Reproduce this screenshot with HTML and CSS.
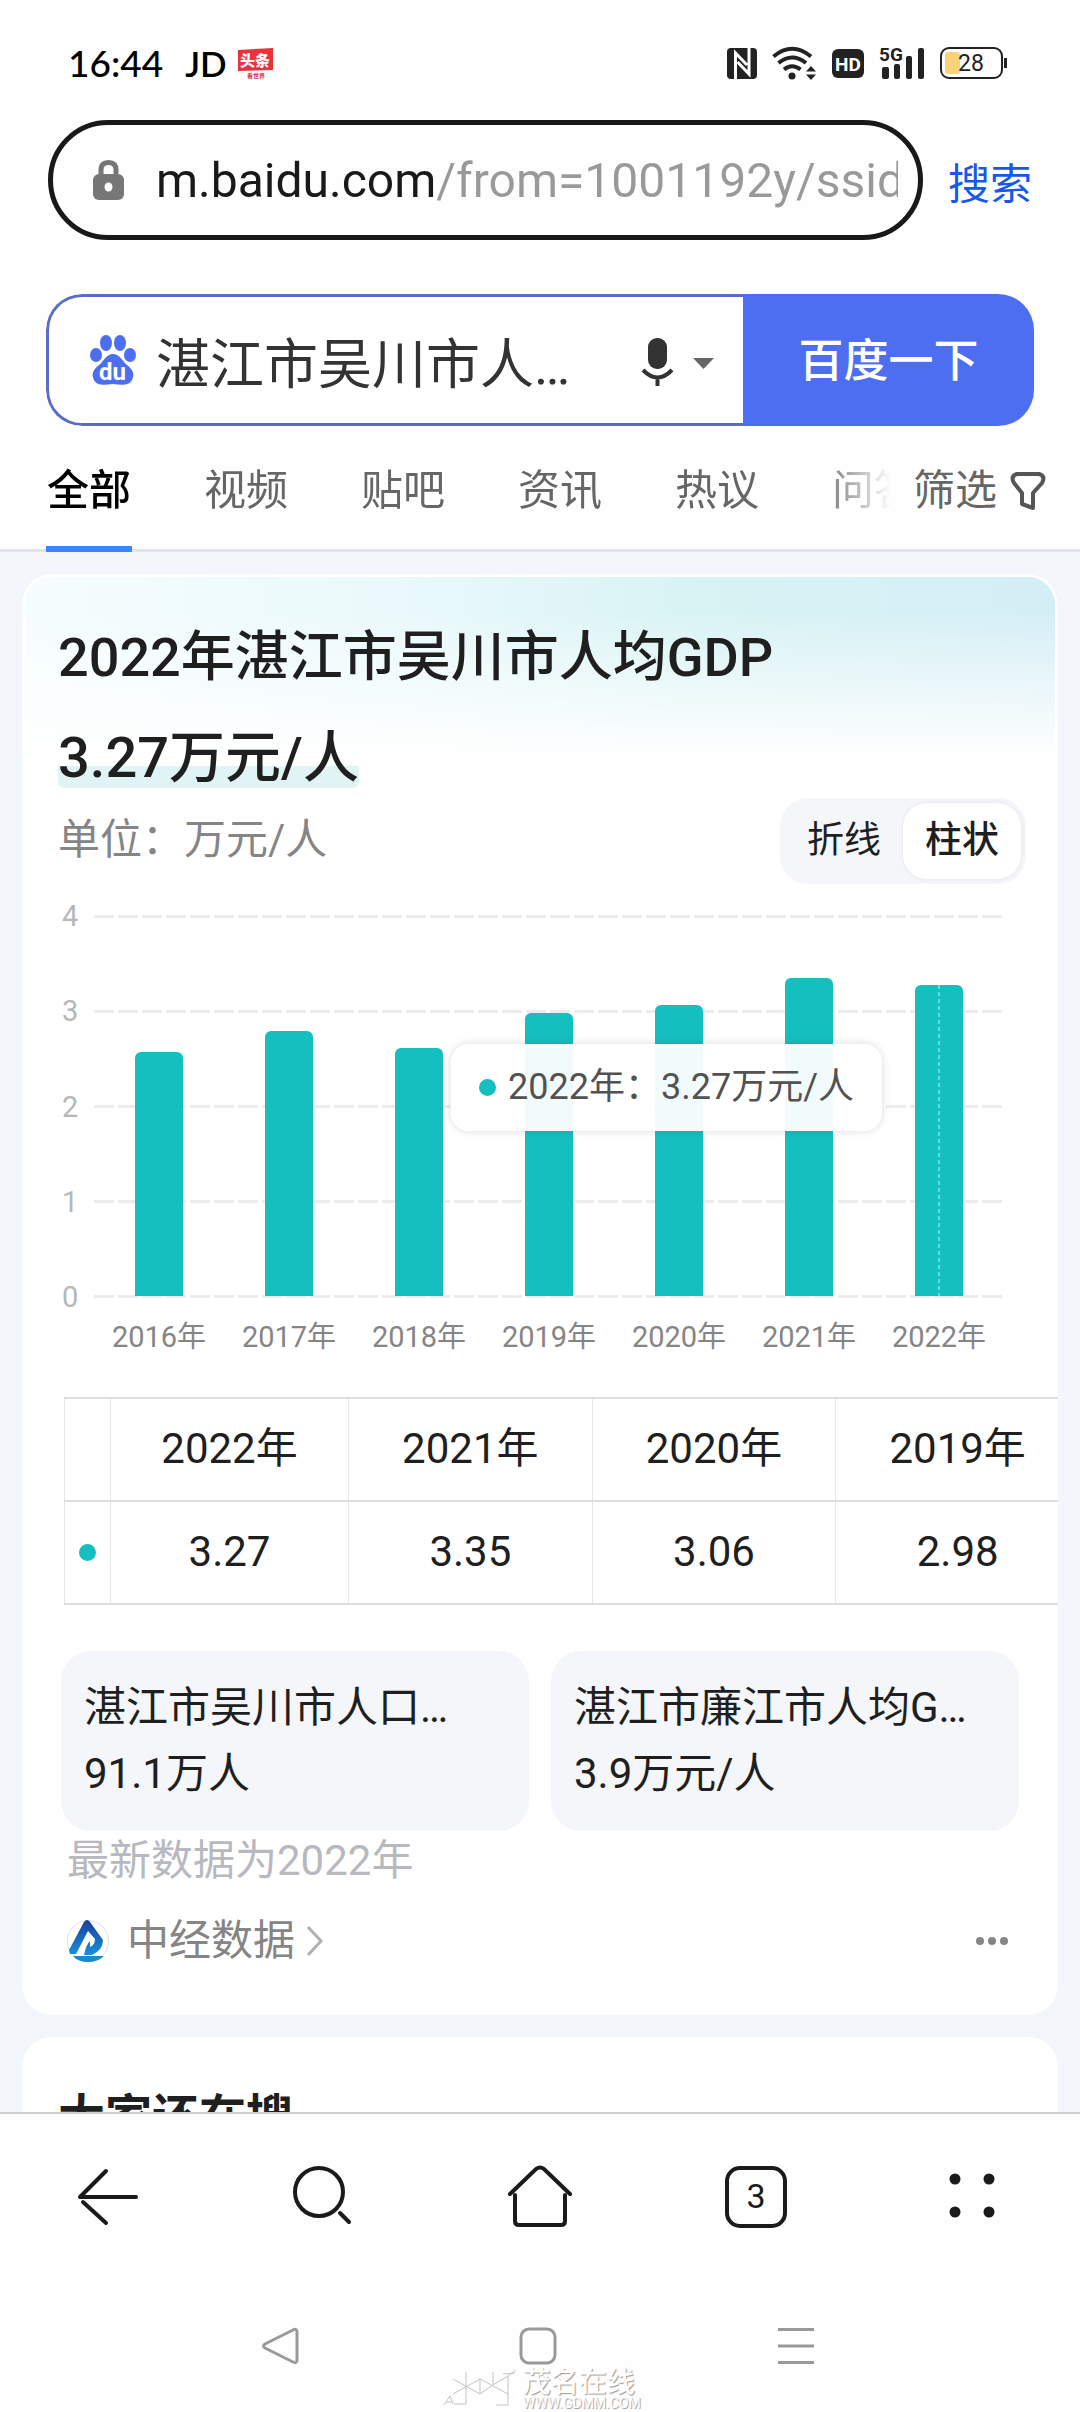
FILE: index.html
```html
<!DOCTYPE html>
<html lang="zh-CN">
<head>
    <meta charset="UTF-8">
    <meta name="viewport" content="width=device-width, initial-scale=1.0">
    <title>湛江市吴川市人均GDP</title>
    <link rel="stylesheet" href="styles.css">
</head>
<body>
    <div class="status">
        <span class="time">16:44</span>
        <span class="jd">JD</span>
        <svg class="toutiao" width="37" height="31" viewBox="0 0 37 31">
            <path d="M1 2L36 0V22L1 23Z" fill="#e8323c"/>
            <text x="18" y="18" font-size="15" font-weight="900" text-anchor="middle" fill="#fff">头条</text>
            <text x="19" y="30" font-size="6" font-weight="700" text-anchor="middle" fill="#d8324c">看世界</text>
        </svg>
        <div class="status-right">
            <svg width="30" height="31" viewBox="0 0 30 31">
                <rect width="30" height="31" rx="4" fill="#222"/>
                <path d="M8.500 31V5L20 17M22 0V26L10.500 14" fill="none" stroke="#fff" stroke-width="3"/>
            </svg>
            <svg width="45" height="34" viewBox="0 0 45 34" fill="none" stroke="#222" stroke-width="4">
                <path d="M1.500 10.500Q20 -5 39 10.500M6.500 17Q20 6 34 17M12 23.500Q20 17 28.500 23.500"/>
                <circle cx="20" cy="30" r="3.500" fill="#222" stroke="none"/>
                <path d="M34 25.500L39 20L44 25.500ZM34 28.500L39 34L44 28.500Z" fill="#222" stroke="none"/>
            </svg>
            <svg width="32" height="29" viewBox="0 0 32 29">
                <rect width="32" height="29" rx="6" fill="#222"/>
                <text x="16" y="21.500" font-size="19" font-weight="700" text-anchor="middle" fill="#fff">HD</text>
            </svg>
            <svg width="46" height="34" viewBox="0 0 46 34" fill="#222">
                <text x="0" y="15" font-size="19" font-weight="700">5G</text>
                <rect x="3" y="21" width="7" height="12" rx="2"/>
                <rect x="15" y="18" width="6" height="15" rx="2"/>
                <rect x="27" y="10" width="6" height="23" rx="2"/>
                <rect x="39" y="2" width="6" height="31" rx="2"/>
            </svg>
            <svg width="68" height="32" viewBox="0 0 68 32">
                <rect x="5" y="5" width="15" height="22" rx="3" fill="#fbd27a"/>
                <rect x="1" y="1" width="61" height="30" rx="8" fill="none" stroke="#222" stroke-width="2"/>
                <path d="M65.500 11V21" stroke="#222" stroke-width="3"/>
                <text x="31" y="24" font-size="23" text-anchor="middle" fill="#222">28</text>
            </svg>
        </div>
    </div>

    <form class="address">
        <div class="address-box">
            <svg width="31" height="40" viewBox="0 0 31 40">
                <path d="M8 18V10Q8 2.500 15.500 2.500T23 10V18" fill="none" stroke="#777" stroke-width="5"/>
                <rect y="14" width="31" height="26" rx="6" fill="#777"/>
                <ellipse cx="15.500" cy="27" rx="4" ry="4.500" fill="#fff"/>
            </svg>
            <input class="url" type="text" aria-label="网址" value="m.baidu.com/from=1001192y/ssid=0">
        </div>
        <button class="address-go" type="button">搜索</button>
    </form>

    <form class="search">
        <div class="search-field">
            <svg class="paw" width="46" height="50" viewBox="0 0 46 50" fill="#4e6ef2">
                <ellipse cx="16" cy="8" rx="6" ry="8"/>
                <ellipse cx="30" cy="8" rx="6" ry="8"/>
                <ellipse cx="6" cy="20" rx="6" ry="7"/>
                <ellipse cx="40" cy="20" rx="6" ry="7"/>
                <path d="M23 19C30 19 32 26 37 30C43 35 45 39 42 45C39 51 31 50 23 49C15 50 7 51 4 45C1 39 3 35 9 30C14 26 16 19 23 19Z"/>
                <text x="22.500" y="45" font-size="24" font-weight="700" text-anchor="middle" fill="#fff">du</text>
            </svg>
            <input class="query" type="text" aria-label="搜索内容" value="湛江市吴川市人均GDP">
            <button class="voice" type="button" aria-label="语音搜索">
                <svg width="74" height="48" viewBox="0 0 74 48">
                    <rect x="7" width="19" height="31" rx="9" fill="#333"/>
                    <path d="M2 32Q16.500 47 31 32M16.500 39V48" fill="none" stroke="#333" stroke-width="4"/>
                    <path d="M52 20H73L62.500 31Z" fill="#666"/>
                </svg>
            </button>
        </div>
        <button class="submit" type="button">百度一下</button>
    </form>

    <nav class="tabs">
        <div class="tab-list">
            <a class="active" href="#">全部</a>
            <a href="#">视频</a>
            <a href="#">贴吧</a>
            <a href="#">资讯</a>
            <a href="#">热议</a>
            <a href="#">问答</a>
        </div>
        <button class="filter" type="button">筛选
            <svg width="34" height="38" viewBox="0 0 34 38" fill="none" stroke="#555" stroke-width="4" stroke-linejoin="round">
                <path d="M6 2H28Q35 4 31 11L22 21V36L11 32V21L3 11Q-1 4 6 2Z"/>
            </svg>
        </button>
    </nav>

    <main>
        <section class="card gdp">
            <h1>2022年湛江市吴川市人均GDP</h1>
            <p class="value"><span>3.27万元/人</span></p>
            <div class="unit-row">
                <span class="unit">单位：万元/人</span>
                <div class="switch">
                    <button type="button">折线</button>
                    <button class="on" type="button">柱状</button>
                </div>
            </div>

            <div class="chart">
                <div class="y-axis"><span>4</span><span>3</span><span>2</span><span>1</span><span>0</span></div>
                <div class="plot">
                    <div class="grid-lines"><i></i><i></i><i></i><i></i><i></i></div>
                    <div class="bars">
                        <div class="bar" style="height: 64.5%"></div>
                        <div class="bar" style="height: 70%"></div>
                        <div class="bar" style="height: 65.5%"></div>
                        <div class="bar" style="height: 74.75%"></div>
                        <div class="bar" style="height: 76.75%"></div>
                        <div class="bar" style="height: 84%"></div>
                        <div class="bar current" style="height: 82%"></div>
                    </div>
                    <div class="tooltip"><i class="dot"></i>2022年：3.27万元/人</div>
                </div>
                <div class="x-axis">
                    <span>2016年</span><span>2017年</span><span>2018年</span><span>2019年</span><span>2020年</span><span>2021年</span><span>2022年</span>
                </div>
            </div>

            <div class="table-wrap">
                <table>
                    <colgroup>
                        <col class="key">
                        <col class="latest">
                        <col span="3">
                    </colgroup>
                    <tr><th></th><th>2022年</th><th>2021年</th><th>2020年</th><th>2019年</th></tr>
                    <tr><td><i class="dot"></i></td><td>3.27</td><td>3.35</td><td>3.06</td><td>2.98</td></tr>
                </table>
            </div>

            <div class="related">
                <a href="#"><span>湛江市吴川市人口…</span><span>91.1万人</span></a>
                <a href="#"><span>湛江市廉江市人均G…</span><span>3.9万元/人</span></a>
            </div>
            <p class="note">最新数据为2022年</p>
            <div class="source">
                <a href="#">
                    <svg width="42" height="44" viewBox="0 0 42 44">
                        <defs>
                            <linearGradient id="drop" x1="0" y1="0" x2="0" y2="1">
                                <stop offset="0" stop-color="#1c3f9c"/>
                                <stop offset="1" stop-color="#1590dc"/>
                            </linearGradient>
                        </defs>
                        <circle cx="21" cy="22" r="20.500" fill="#fff" stroke="#e0e0e0"/>
                        <path d="M6 37H37Q31 43 21 43T6 37Z" fill="#1a8ac8"/>
                        <path d="M3 35L2 31L17 3Q20 -1 23 3L36 21Q36 31 25 36H17Q19 26 23 22V28Q28 26 28 20L21 12L9 35Z" fill="url(#drop)"/>
                        <path d="M12 33L21 16L24 20Q17 27 16 36Z" fill="#fff"/>
                    </svg>
                    中经数据
                    <svg class="chevron" width="16" height="30" viewBox="0 0 16 30" fill="none" stroke="#b0b0b0" stroke-width="3"><path d="M1 1L14 15L1 29"/></svg>
                </a>
                <button type="button" aria-label="更多">
                    <svg width="32" height="8" viewBox="0 0 32 8" fill="#858585"><circle cx="4" cy="4" r="4"/><circle cx="16" cy="4" r="4"/><circle cx="28" cy="4" r="4"/></svg>
                </button>
            </div>
        </section>

        <section class="card more">
            <h2>大家还在搜</h2>
        </section>
    </main>

    <footer>
        <nav class="toolbar">
            <button type="button" aria-label="后退"><svg width="64" height="64" viewBox="0 0 64 64"><path d="M60 32H4M30 6L4 32M7 37L30 58"/></svg></button>
            <button type="button" aria-label="搜索"><svg width="64" height="64" viewBox="0 0 64 64"><circle cx="27" cy="27" r="24"/><path d="M48 48L57 57"/></svg></button>
            <button type="button" aria-label="主页"><svg width="64" height="64" viewBox="0 0 64 64"><path d="M2 29L28 4Q32 1 36 4L62 29M7 30V56Q7 60 11 60H53Q57 60 57 56V30"/></svg></button>
            <button type="button" aria-label="标签页"><svg width="64" height="64" viewBox="0 0 64 64"><rect x="3" y="3" width="58" height="58" rx="13"/><text x="32" y="43" text-anchor="middle">3</text></svg></button>
            <button type="button" aria-label="菜单"><svg width="64" height="64" viewBox="0 0 64 64"><g class="fill"><circle cx="15" cy="14" r="5.500"/><circle cx="49" cy="14" r="5.500"/><circle cx="15" cy="47" r="5.500"/><circle cx="49" cy="47" r="5.500"/></g></svg></button>
        </nav>
        <nav class="system">
            <button type="button" aria-label="返回"><svg width="36" height="36" viewBox="0 0 36 36"><path d="M31 2Q35 0 35 4V32Q35 36 31 34L3 20Q0 18 3 16Z"/></svg></button>
            <button type="button" aria-label="桌面"><svg width="36" height="36" viewBox="0 0 36 36"><rect x="1" y="1" width="34" height="34" rx="8"/></svg></button>
            <button type="button" aria-label="最近任务"><svg width="36" height="36" viewBox="0 0 36 36"><path d="M0 1.500H36M0 18H36M0 34.500H36"/></svg></button>
        </nav>
        <div class="watermark">
            <svg width="80" height="38" viewBox="0 0 80 38" fill="none" stroke="#c4c4c4" stroke-width="1">
                <path d="M11 35H23V3M10 10L37 25L50 16M10 25L37 10V25M37 10L65 25M50 3V16L65 7V36H53M65 7L73 1M60 5L72 4M1 36L7 27L10 35M3 33H9"/>
            </svg>
            <div class="watermark-text"><b>茂名在线</b><span>WWW.GDMM.COM</span></div>
        </div>
    </footer>
</body>
</html>
```

FILE: styles.css
```css
* {
    box-sizing: border-box;
}
body {
    margin: 0;
    height: 100vh;
    display: flex;
    flex-direction: column;
    overflow: hidden;
    background: #fefefe;
    color: #1f1f1f;
    font-family: Roboto, "Noto Sans CJK SC", sans-serif;
    font-size: 42px;
}
button, input {
    margin: 0;
    padding: 0;
    border: 0;
    outline: 0;
    background: none;
    color: inherit;
    font-family: inherit;
    font-size: inherit;
}
a {
    color: inherit;
    text-decoration: none;
}
h1, h2, p {
    margin: 0;
    font-weight: 500;
}
svg {
    display: block;
    flex: none;
    overflow: visible;
}

/* status bar */
.status {
    display: flex;
    align-items: center;
    padding: 43px 72px 37px 68px;
    line-height: 40px;
    color: #000;
}
.time, .jd {
    font-family: Lato, sans-serif;
    font-size: 37px;
    font-weight: 500;
}
.jd {
    margin: 0 10px 0 22px;
    font-size: 35px;
    font-weight: 600;
}
.status-right {
    margin-left: auto;
    display: flex;
    align-items: center;
    gap: 15px;
}

/* address bar */
.address {
    display: flex;
    align-items: center;
    gap: 25px;
    padding: 0 48px;
}
.address-box {
    flex: 1;
    min-width: 0;
    display: flex;
    align-items: center;
    gap: 32px;
    padding: 25px 20px 25px 40px;
    border: 5px solid #191919;
    border-radius: 60px;
}
.url {
    flex: 1;
    min-width: 0;
    height: 60px;
    font-size: 48px;
    background: linear-gradient(90deg, #191919 277px, #999 277px);
    -webkit-background-clip: text;
    background-clip: text;
    color: transparent;
}
.address-go {
    color: #1558ee;
}

/* baidu search box */
.search {
    display: flex;
    margin: 54px 46px 0;
    border-radius: 36px;
    overflow: hidden;
}
.search-field {
    flex: 1;
    min-width: 0;
    display: flex;
    align-items: center;
    border: 3px solid #5a6bc8;
    border-right: 0;
    border-radius: 36px 0 0 36px;
    background: #fff;
}
.paw {
    margin: 0 20px 0 41px;
}
.query {
    flex: 1;
    min-width: 0;
    font-size: 54px;
    color: #333;
    text-overflow: ellipsis;
}
.voice {
    margin: 4px 28px 0 62px;
}
.submit {
    width: 291px;
    padding-top: 4px;
    background: #4e6ef2;
    color: #fff;
    font-size: 45px;
    font-weight: 500;
    line-height: 128px;
}

/* tabs */
.tabs {
    display: flex;
    padding: 35px 35px 0 46px;
    line-height: 60px;
    color: #666;
    border-bottom: 3px solid #e4e4e8;
}
.tab-list {
    flex: 1;
    min-width: 0;
    display: flex;
    gap: 71px;
    margin-bottom: -3px;
    overflow: hidden;
    white-space: nowrap;
    -webkit-mask-image: linear-gradient(90deg, #000 770px, transparent 845px);
    mask-image: linear-gradient(90deg, #000 770px, transparent 845px);
}
.tab-list a {
    padding: 0 1px 25px;
    border-bottom: 6px solid transparent;
}
.tab-list .active {
    color: #000;
    font-weight: 500;
    border-color: #3388ff;
}
.filter {
    display: flex;
    align-items: center;
    gap: 14px;
    height: 60px;
    padding-left: 10px;
    line-height: 60px;
}

/* results */
main {
    flex: 1;
    min-height: 0;
    overflow: hidden;
    display: flex;
    flex-direction: column;
    gap: 22px;
    padding: 22px 22px 0;
    background: #f3f6fa;
}
.card {
    flex: none;
    padding: 50px 36px 44px;
    border-radius: 30px;
    background: #fff;
    overflow: hidden;
}
.gdp {
    padding-top: 44px;
    box-shadow: inset 0 0 0 3px #fff;
    background:
        linear-gradient(180deg, rgba(255, 255, 255, 0) 20%, #fff 100%) top / 100% 186px no-repeat,
        linear-gradient(90deg, #f6fdfe 0, #e9f9fb 38%, #d9f3f4 64%, #d5eef6 100%) top / 100% 186px no-repeat,
        #fff;
}
h1 {
    font-size: 54px;
    line-height: 80px;
}
.value {
    margin-top: 30px;
    line-height: 60px;
    font-size: 56px;
}
.value span {
    display: inline-block;
    border-radius: 6px;
    background: linear-gradient(#e0f4f6, #e0f4f6) bottom / 100% 22px no-repeat;
}
.unit-row {
    display: flex;
    justify-content: space-between;
    margin-top: 10px;
    line-height: 84px;
}
.unit {
    color: #858585;
}
.switch {
    display: flex;
    margin-right: -4px;
    padding: 5px;
    border-radius: 28px;
    background: #f4f6fa;
}
.switch button {
    width: 118px;
    line-height: 76px;
    border-radius: 24px;
    font-size: 37px;
}
.switch .on {
    background: #fff;
    font-weight: 500;
    box-shadow: 0 0 4px rgba(0, 0, 0, 0.08);
}

/* bar chart */
.chart {
    display: grid;
    grid-template-columns: 36px 1fr;
    margin: 12px 18px 0 0;
    font-size: 29px;
    line-height: 40px;
}
.y-axis {
    display: flex;
    flex-direction: column;
    justify-content: space-between;
    padding-left: 4px;
    color: #b7b7b7;
}
.plot {
    position: relative;
    display: grid;
    height: 383px;
    margin: 19px 0;
}
.grid-lines, .bars {
    grid-area: 1 / 1;
}
.grid-lines {
    display: flex;
    flex-direction: column;
    justify-content: space-between;
}
.grid-lines i {
    height: 3px;
    background: repeating-linear-gradient(90deg, #ececec 0 20px, transparent 20px 24px);
}
.bars {
    display: grid;
    grid-template-columns: repeat(7, 1fr);
    align-items: end;
    justify-items: center;
    padding: 2px 0;
}
.bar {
    width: 48px;
    border-radius: 6px 6px 0 0;
    background: #15bfc0;
}
.current {
    background: repeating-linear-gradient(180deg, #5ee0d6 0 4px, #15bfc0 4px 7px) center / 2px 100% no-repeat, #15bfc0;
}
.tooltip {
    position: absolute;
    top: 129px;
    right: 122px;
    display: flex;
    align-items: center;
    gap: 12px;
    padding: 0 28px;
    border-radius: 18px;
    background: rgba(255, 255, 255, 0.94);
    box-shadow: 0 0 8px rgba(0, 0, 0, 0.15);
    color: #525252;
    font-size: 36px;
    line-height: 87px;
}
.dot {
    flex: none;
    display: block;
    width: 17px;
    height: 17px;
    margin: 0 auto;
    border-radius: 50%;
    background: #15bfc0;
}
.x-axis {
    grid-column: 2;
    display: grid;
    grid-template-columns: repeat(7, 1fr);
    text-align: center;
    color: #858585;
}

/* table, cut off by the card edge */
.table-wrap {
    margin: 40px -36px 0 6px;
    overflow: hidden;
}
table {
    width: 1016px;
    table-layout: fixed;
    border-collapse: collapse;
    line-height: 60px;
    text-align: center;
}
th, td {
    padding: 20px 0 21px;
    border: 1px solid #e6e6e6;
    border-top: 2px solid #dedede;
    border-bottom: 2px solid #dedede;
    font-weight: 400;
}
.key {
    width: 46px;
}
.latest {
    width: 238px;
}

.related {
    display: grid;
    grid-template-columns: 1fr 1fr;
    gap: 22px;
    margin: 46px 3px 0;
}
.related a {
    display: flex;
    flex-direction: column;
    padding: 24px 23px;
    border-radius: 30px;
    background: #f4f6fa;
    line-height: 66px;
    white-space: nowrap;
}
.note {
    margin-left: 9px;
    line-height: 60px;
    font-weight: 400;
    color: #b7b9bf;
}
.source {
    display: flex;
    align-items: center;
    justify-content: space-between;
    margin: 20px 14px 0 9px;
    line-height: 60px;
    color: #858585;
}
.source a {
    display: flex;
    align-items: center;
    gap: 18px;
}
.chevron {
    margin-left: -6px;
}

h2 {
    font-size: 47px;
    line-height: 60px;
    font-weight: 700;
}

/* browser toolbar and system keys */
footer {
    position: relative;
    border-top: 2px solid #ccced2;
    background: #fefefe;
}
.toolbar {
    display: grid;
    grid-template-columns: repeat(5, 1fr);
    justify-items: center;
    padding-top: 51px;
}
.toolbar svg {
    fill: none;
    stroke: #1a1a1a;
    stroke-width: 4;
    stroke-linecap: round;
}
.toolbar text {
    font-size: 34px;
    fill: #1a1a1a;
    stroke: none;
}
.toolbar .fill {
    fill: #1a1a1a;
    stroke: none;
}
.system {
    display: flex;
    justify-content: center;
    gap: 222px;
    padding: 99px 4px 48px 0;
}
.system svg {
    fill: none;
    stroke: #999;
    stroke-width: 3;
}
.watermark {
    position: absolute;
    left: 41%;
    bottom: 3px;
    display: flex;
}
.watermark-text {
    display: flex;
    flex-direction: column;
    color: #fff;
    text-shadow: 1px 1px 1px #999;
}
.watermark-text b {
    font-size: 28px;
    font-weight: 500;
    line-height: 28px;
}
.watermark-text span {
    font-size: 14px;
    line-height: 12px;
}
```
